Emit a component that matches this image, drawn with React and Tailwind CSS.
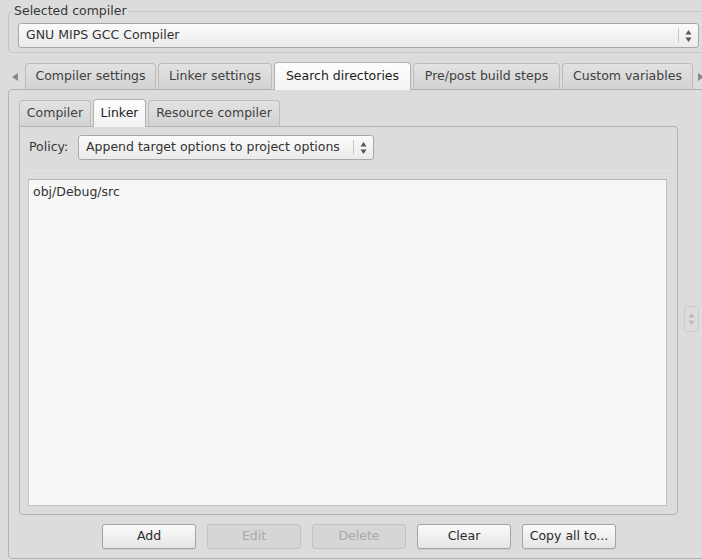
import React from "react";

const font = { fontFamily: '"DejaVu Sans", Verdana, sans-serif' };

function Arrows({ dim }) {
  const c = dim ? "#b8b8b8" : "#555";
  return (
    <svg width="7" height="14" viewBox="0 0 7 14">
      <path d="M3.5 1 L6.5 5.5 L0.5 5.5 Z" fill={c} />
      <path d="M0.5 8.5 L6.5 8.5 L3.5 13 Z" fill={c} />
    </svg>
  );
}

function Tab({ children, selected, w }) {
  return selected ? (
    <div
      className={`h-[28px] ${w} shrink-0 -mb-px flex items-center justify-center rounded-t-[4px] border border-b-0 border-[#b0b0b0] bg-gradient-to-b from-[#fdfdfd] to-[#f3f3f3] text-[#222] relative z-10`}
    >
      {children}
    </div>
  ) : (
    <div
      className={`h-[26px] ${w} shrink-0 flex items-center justify-center rounded-t-[4px] border border-b-0 border-[#bcbcbc] bg-gradient-to-b from-[#e2e2e2] to-[#d3d3d3] text-[#404040]`}
    >
      {children}
    </div>
  );
}

function Button({ children, disabled }) {
  return disabled ? (
    <div className="w-[94px] h-[25px] shrink-0 flex items-center justify-center rounded-[3px] border border-[#c2c2c2] bg-[#d6d6d6] text-[#a9a9a9]">
      {children}
    </div>
  ) : (
    <div className="w-[94px] h-[25px] shrink-0 flex items-center justify-center rounded-[3px] border border-[#a4a4a4] bg-gradient-to-b from-[#fbfbfb] to-[#e4e4e4] text-[#2a2a2a] shadow-[0_1px_0_rgba(0,0,0,0.06)]">
      {children}
    </div>
  );
}

export default function App() {
  return (
    <div
      className="w-[702px] h-[560px] bg-[#dcdcdc] overflow-hidden text-[12.5px] text-[#333] relative"
      style={font}
    >
      {/* Selected compiler group */}
      <div className="pt-[11px] pl-[8px]">
        <div className="relative w-[720px] h-[42px] rounded-[4px] border border-[#c6c6c6] pt-[11px] pl-[9px]">
          <div className="absolute -top-[10px] left-[3px] px-[2px] bg-[#dcdcdc] leading-[18px] text-[#383838]">
            Selected compiler
          </div>
          <div className="w-[681px] h-[25px] rounded-[3px] border border-[#a8a8a8] bg-gradient-to-b from-[#fbfbfb] to-[#ebebeb] flex items-center pl-[7px] pr-[6px]">
            <span className="flex-1">GNU MIPS GCC Compiler</span>
            <div className="h-[15px] border-l border-[#c8c8c8] pl-[6px] flex items-center">
              <Arrows />
            </div>
          </div>
        </div>
      </div>

      {/* Outer tab bar */}
      <div className="mt-[8px] flex items-end h-[28px] relative">
        <div className="w-[25px] shrink-0 h-[25px] flex items-center pl-[12px]">
          <svg width="6" height="8" viewBox="0 0 6 8">
            <path d="M6 0 L6 8 L0 4 Z" fill="#888" />
          </svg>
        </div>
        <div className="flex items-end gap-[2px] shrink-0">
          <Tab w="w-[131px]">Compiler settings</Tab>
          <Tab w="w-[114px]">Linker settings</Tab>
          <Tab selected w="w-[137px]">Search directories</Tab>
          <Tab w="w-[147px]">Pre/post build steps</Tab>
          <Tab w="w-[131px]">Custom variables</Tab>
        </div>
        <div className="h-[25px] shrink-0 flex items-center pl-[5px]">
          <svg width="6" height="8" viewBox="0 0 6 8">
            <path d="M0 0 L0 8 L6 4 Z" fill="#888" />
          </svg>
        </div>
      </div>

      {/* Outer pane */}
      <div className="ml-[8px] w-[720px] h-[470px] rounded-[4px] border border-[#b2b2b2] pt-[8px] pl-[10px]">
        {/* Inner tab bar */}
        <div className="flex items-end gap-[2px] h-[28px]">
          <Tab w="w-[72px]">Compiler</Tab>
          <Tab selected w="w-[53px]">Linker</Tab>
          <Tab w="w-[132px]">Resource compiler</Tab>
        </div>

        <div className="flex">
          {/* Inner pane */}
          <div className="w-[659px] h-[389px] rounded-b-[4px] rounded-tr-[4px] border border-[#b2b2b2] pt-[8px] pl-[8px] pr-[10px] pb-[8px] flex flex-col">
            <div className="flex items-center h-[25px]">
              <span className="ml-[1px] w-[49px] text-[#383838]">Policy:</span>
              <div className="w-[296px] h-[25px] rounded-[3px] border border-[#a8a8a8] bg-gradient-to-b from-[#fbfbfb] to-[#ebebeb] flex items-center pl-[7px] pr-[6px]">
                <span className="flex-1">Append target options to project options</span>
                <div className="h-[15px] border-l border-[#c8c8c8] pl-[6px] flex items-center">
                  <Arrows />
                </div>
              </div>
            </div>
            <div className="mt-[10px] -mr-[8px] border-t border-[#e4e4e4]" />
            <div className="mt-[8px] flex-1 border border-[#c2c2c2] border-t-[#b4b4b4] bg-[#f7f7f7] pl-[4px] pt-[3px]">
              obj/Debug/src
            </div>
          </div>
          <div className="w-[27px] flex items-center justify-center pb-[4px]">
            <div className="w-[15px] h-[26px] rounded-[3px] border border-[#cbcbcb] flex items-center justify-center">
              <Arrows dim />
            </div>
          </div>
        </div>

        {/* Buttons */}
        <div className="mt-[9px] pl-[83px] flex gap-[11px]">
          <Button>Add</Button>
          <Button disabled>Edit</Button>
          <Button disabled>Delete</Button>
          <Button>Clear</Button>
          <Button>Copy all to...</Button>
        </div>
      </div>
    </div>
  );
}
